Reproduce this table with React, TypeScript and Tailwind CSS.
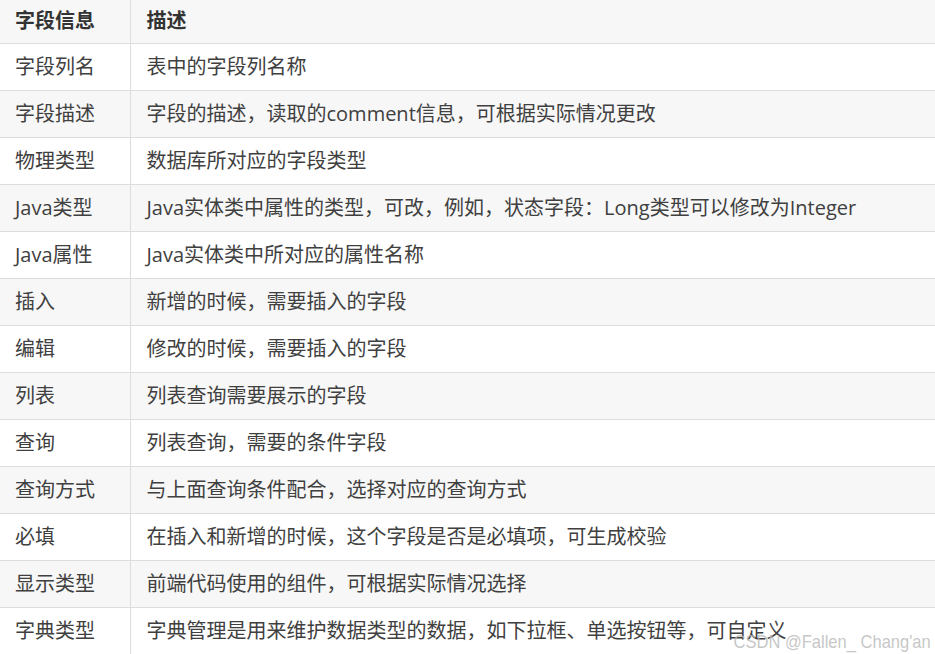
const rows: [string, string][] = [
  ["字段列名", "表中的字段列名称"],
  ["字段描述", "字段的描述，读取的comment信息，可根据实际情况更改"],
  ["物理类型", "数据库所对应的字段类型"],
  ["Java类型", "Java实体类中属性的类型，可改，例如，状态字段：Long类型可以修改为Integer"],
  ["Java属性", "Java实体类中所对应的属性名称"],
  ["插入", "新增的时候，需要插入的字段"],
  ["编辑", "修改的时候，需要插入的字段"],
  ["列表", "列表查询需要展示的字段"],
  ["查询", "列表查询，需要的条件字段"],
  ["查询方式", "与上面查询条件配合，选择对应的查询方式"],
  ["必填", "在插入和新增的时候，这个字段是否是必填项，可生成校验"],
  ["显示类型", "前端代码使用的组件，可根据实际情况选择"],
  ["字典类型", "字典管理是用来维护数据类型的数据，如下拉框、单选按钮等，可自定义"],
];

export default function App() {
  return (
    <div className="relative w-[935px] h-[654px] overflow-hidden bg-white font-['Open_Sans','Noto_Sans_CJK_SC',sans-serif] text-[20px] text-[#404040]">
      <table className="w-full border-collapse">
        <thead>
          <tr className="h-[43px] bg-[#f7f7f7] border-b border-[#dddddd]">
            <th className="w-[130px] border-r border-[#dddddd] pl-[15px] text-left font-bold text-[#333333]">字段信息</th>
            <th className="pl-[16px] text-left font-bold text-[#333333]">描述</th>
          </tr>
        </thead>
        <tbody>
          {rows.map(([name, desc], i) => (
            <tr key={name} className={`h-[47px] border-b border-[#dddddd] ${i % 2 === 1 ? "bg-[#f7f7f7]" : "bg-white"}`}>
              <td className="border-r border-[#dddddd] pl-[15px] whitespace-nowrap">{name}</td>
              <td className="pl-[16px] whitespace-nowrap">{desc}</td>
            </tr>
          ))}
        </tbody>
      </table>
      <div className="absolute right-[4px] bottom-[3px] origin-right scale-x-[0.87] whitespace-nowrap text-[19px] leading-none text-[#b8b8b8]/80 font-['Liberation_Sans',sans-serif]">
        CSDN @Fallen_ Chang'an
      </div>
    </div>
  );
}
